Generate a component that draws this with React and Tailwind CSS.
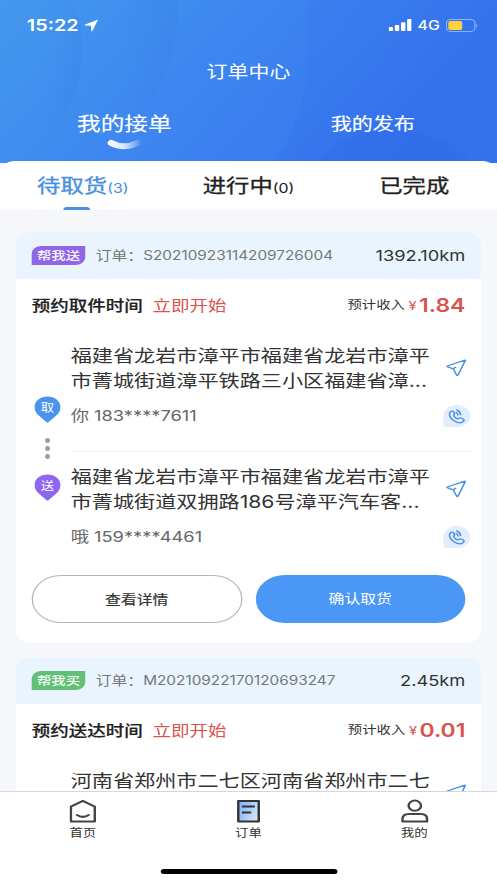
const orders = [
  {
    id: 'S20210923114209726004',
    tag: '帮我送',
    tagColor: 'bg-[#8f66e6]',
    distance: '1392.10km',
    timeLabel: '预约取件时间',
    income: '1.84',
    stops: [
      { lines: ['福建省龙岩市漳平市福建省龙岩市漳平', '市菁城街道漳平铁路三小区福建省漳...'], contact: '你 183****7611' },
      { lines: ['福建省龙岩市漳平市福建省龙岩市漳平', '市菁城街道双拥路186号漳平汽车客...'], contact: '哦 159****4461' },
    ],
  },
  {
    id: 'M20210922170120693247',
    tag: '帮我买',
    tagColor: 'bg-[#61bf76]',
    distance: '2.45km',
    timeLabel: '预约送达时间',
    income: '0.01',
    stops: [
      { lines: ['河南省郑州市二七区河南省郑州市二七'] },
    ],
  },
]

const SendIcon = () => (
  <svg className="mr-[1.5px] w-[17px] h-[18px]" viewBox="0 0 17 18" fill="none" stroke="#4a90e2" strokeWidth="1.3" strokeLinejoin="round">
    <path d="M15.6 1.2 L1.1 7 Q0.6 7.3 1.1 7.6 L6 9.8 L8.9 16.2 Q9.4 17 9.9 16.2 L15.9 1.8 Q16 1.1 15.6 1.2 Z" />
    <path d="M6 9.8 L8.4 7.9" />
  </svg>
)

const PhoneIcon = () => (
  <div className="w-[22px] h-[22px] flex items-center justify-center bg-[#e1edfb] rounded-[11px] rounded-bl-[2px]">
    <svg className="w-[14px] h-[15px]" viewBox="0 0 14 15" fill="none" stroke="#4a90e2" strokeWidth="1.3" strokeLinecap="round" strokeLinejoin="round">
      <path d="M1.7 2.9 C2.6 1.7 3.7 1.8 4.4 2.9 L5.1 4.2 C5.5 5.2 4.3 5.6 4.4 6.4 C4.8 8 6 9.2 7.5 9.8 C8.6 10 8.8 8.6 10 8.8 L12.2 10 C13.4 10.9 12.9 12 11.9 12.8 C10 14.3 7 13.9 4.4 11.6 C1.5 9 0 5.3 1.7 2.9 Z" />
      <path d="M6.5 3.5 Q7.8 4.3 7.9 6" />
      <path d="M7 0.9 Q9.7 2.3 10.1 5.6" />
    </svg>
  </div>
)

const Pin = ({ label, color }) => (
  <div className="relative w-[22px] h-[27px]">
    <svg className="w-[22px] h-[27px]" viewBox="0 0 22 27" fill={color}>
      <path d="M11 0.5 C17 0.5 21.6 5 21.6 11 C21.6 14.6 20.4 17.2 18.2 19.4 L12 26 Q11 27 10 26 L3.8 19.4 C1.6 17.2 0.4 14.6 0.4 11 C0.4 5 5 0.5 11 0.5 Z" />
    </svg>
    <span className="absolute inset-x-0 top-[4px] text-center text-[11px] leading-[16px] text-white">{label}</span>
  </div>
)

const Stop = ({ stop }) => (
  <div className="flex h-[121px] pt-[12px]">
    <div className="flex-1 whitespace-nowrap">
      <div className="text-[17.35px] leading-[25px] text-[#333]">
        {stop.lines.map((line) => (
          <p key={line}>{line}</p>
        ))}
      </div>
      <p className="mt-[13px] text-[15px] leading-[20px] text-[#666]">{stop.contact}</p>
    </div>
    <div className="w-[22px] flex flex-col items-center pt-[16px] gap-[28px]">
      <SendIcon />
      <PhoneIcon />
    </div>
  </div>
)

const OrderCard = ({ order }) => (
  <section className="shrink-0 bg-white rounded-[13px] overflow-hidden">
    <header className="h-[47px] px-[13px] flex items-center bg-[#eaf4fe]">
      <span className={`h-[19px] w-[44px] rounded-tl-[8px] rounded-br-[8px] text-center text-[11.8px] leading-[20px] text-white [-webkit-text-stroke:0.15px_white] ${order.tagColor}`}>
        {order.tag}
      </span>
      <span className="ml-[8.5px] text-[13px] text-[#777]">订单：</span>
      <span className="pt-[2px] text-[12.6px] text-[#777]">{order.id}</span>
      <span className="ml-auto pt-px text-[15px] text-[#333]">{order.distance}</span>
    </header>

    <div className="h-[52px] px-[13px] pt-[2px] flex items-center whitespace-nowrap">
      <span className="text-[15.2px] font-medium text-[#222] [-webkit-text-stroke:0.2px_#222]">{order.timeLabel}</span>
      <span className="ml-[8px] text-[15.2px] text-[#d9534f]">立即开始</span>
      <span className="ml-auto text-[11.8px] text-[#333]">预计收入</span>
      <span className="ml-[3px] text-[12px] text-[#d9534f]">¥</span>
      <span className="ml-[2px] text-[18.8px] font-semibold text-[#d9534f]">{order.income}</span>
    </div>

    <div className="flex pl-[13px] pr-[9px]">
      <div className="w-[32px] shrink-0 flex flex-col items-start pt-[64.5px] pl-[2px]">
        {order.stops.length > 1 && (
          <>
            <Pin label="取" color="#4a94ee" />
            <div className="w-[22px] flex flex-col items-center gap-[3.4px] pt-[15.5px] pb-[15.5px]">
              <i className="size-[4.6px] rounded-full bg-[#999da3]" />
              <i className="size-[4.6px] rounded-full bg-[#999da3]" />
              <i className="size-[4.6px] rounded-full bg-[#999da3]" />
            </div>
            <Pin label="送" color="#8f66f0" />
          </>
        )}
      </div>
      <div className="flex-1 divide-y divide-[#f2f2f2]">
        {order.stops.map((stop, i) => (
          <Stop key={i} stop={stop} />
        ))}
      </div>
    </div>

    {order.stops.length > 1 && (
      <div className="px-[13px] pt-[2px] pb-[20px] flex gap-[11px]">
        <button className="w-[172.5px] h-[48px] pt-px rounded-full border border-[#b5b5b5] text-[13px] text-[#333] [-webkit-text-stroke:0.2px_#333]">查看详情</button>
        <button className="flex-1 h-[48px] rounded-full bg-[#4b97f5] text-[13px] text-white">确认取货</button>
      </div>
    )}
  </section>
)

const StatusBar = () => (
  <div className="h-[50px] pl-[22px] pr-[15px] flex items-center text-white">
    <span className="text-[16.3px] font-semibold">15:22</span>
    <svg className="ml-[4px] w-[12px] h-[13px]" viewBox="0 0 12 13" fill="white">
      <path d="M11.6 0.5 L0.5 5.8 Q0 6.3 0.8 6.5 L5.6 6.8 L6 12 Q6.3 12.8 6.8 12 Z" />
    </svg>
    <svg className="ml-auto w-[19px] h-[12px]" viewBox="0 0 19 12" fill="white">
      <rect x="0" y="8" width="3.6" height="4" rx="0.8" />
      <rect x="5.1" y="6" width="3.6" height="6" rx="0.8" />
      <rect x="10.2" y="3.2" width="3.6" height="8.8" rx="0.8" />
      <rect x="15.2" y="0" width="3.6" height="12" rx="0.8" />
    </svg>
    <span className="ml-[5px] pt-[2px] text-[13px] font-medium">4G</span>
    <svg className="ml-[5px] w-[27px] h-[13px]" viewBox="0 0 27 13">
      <rect x="0.5" y="0.5" width="23.4" height="12" rx="3.4" fill="none" stroke="white" strokeOpacity="0.45" />
      <rect x="2" y="2" width="11.4" height="9" rx="1.8" fill="#fbd340" />
      <path d="M25 4.4 Q26.6 6.5 25 8.6 Z" fill="white" fillOpacity="0.5" />
    </svg>
  </div>
)

const HeaderBackground = () => (
  <svg className="absolute inset-0 w-full h-full" viewBox="0 0 497 163" preserveAspectRatio="none">
    <defs>
      <linearGradient id="sky" x1="0" y1="0" x2="1" y2="0.3">
        <stop offset="0" stopColor="#4399ee" />
        <stop offset="0.5" stopColor="#3c84f1" />
        <stop offset="1" stopColor="#3472ee" />
      </linearGradient>
      <linearGradient id="ring" x1="0" y1="0" x2="1" y2="0">
        <stop offset="0.82" stopColor="#2a6ad0" stopOpacity="0" />
        <stop offset="1" stopColor="#2a6ad0" stopOpacity="0.12" />
      </linearGradient>
    </defs>
    <rect width="497" height="163" fill="url(#sky)" />
    <path d="M309 0 H497 V163 H276 Q306 110 309 45 Z" fill="#2f6ae6" fillOpacity="0.08" />
    <ellipse cx="120" cy="45" rx="189" ry="210" fill="#4a94f2" fillOpacity="0.12" />
    <ellipse cx="30" cy="5" rx="148" ry="170" fill="url(#ring)" />
    <ellipse cx="-5" cy="50" rx="87" ry="108" fill="url(#ring)" />
    <ellipse cx="393" cy="185" rx="85" ry="55" fill="#2a66dc" fillOpacity="0.14" />
  </svg>
)

const HomeIcon = () => (
  <svg className="w-[22px] h-[24px]" viewBox="0 0 22 24" fill="none" stroke="#444" strokeWidth="2" strokeLinejoin="round">
    <path d="M1.2 7.6 L11 1.8 L20.8 7.6 V22.6 H1.2 Z" />
    <path d="M6.2 16 Q11 19.8 15.8 16" strokeLinecap="round" />
  </svg>
)

const OrderIcon = () => (
  <svg className="w-[20px] h-[24px]" viewBox="0 0 20 24">
    <defs>
      <linearGradient id="paper" x1="0" y1="0" x2="1" y2="0.4">
        <stop offset="0" stopColor="#78aef5" />
        <stop offset="1" stopColor="#cfe2fb" />
      </linearGradient>
    </defs>
    <rect x="1.6" y="2" width="16.8" height="20.4" fill="url(#paper)" stroke="#333" strokeWidth="2" strokeLinejoin="round" />
    <path d="M4.6 7.6 H15.2 M4.6 13.4 H12.2" stroke="#333" strokeWidth="2" />
  </svg>
)

const UserIcon = () => (
  <svg className="w-[23px] h-[24px]" viewBox="0 0 23 24" fill="none" stroke="#444" strokeWidth="2" strokeLinejoin="round">
    <circle cx="11.5" cy="6.7" r="5.1" />
    <path d="M1.4 22.5 V20 Q1.4 15 6.6 15 H16.4 Q21.6 15 21.6 20 V22.5 Z" />
  </svg>
)

const navItems = [
  { label: '首页', Icon: HomeIcon },
  { label: '订单', Icon: OrderIcon },
  { label: '我的', Icon: UserIcon },
]

// The whole screen is laid out 408px wide and stretched to the 497px viewport
export default function App() {
  return (
    <div className="w-[497px] h-[883px] overflow-hidden">
      <div className="w-[408px] h-[883px] origin-top-left scale-x-[1.2182] flex flex-col overflow-hidden bg-[#f5f7fa] font-['Inter','Noto_Sans_CJK_SC',sans-serif]">
        <div className="relative h-[163px] shrink-0">
          <HeaderBackground />
          <div className="relative text-white">
            <StatusBar />
            <h1 className="h-[44px] text-center text-[17.2px] leading-[44px]">订单中心</h1>
            <div className="grid grid-cols-2 text-center">
              <div className="flex flex-col items-center">
                <span className="text-[19.4px] leading-[60px] h-[45px] [-webkit-text-stroke:0.15px_white]">我的接单</span>
                <svg className="mr-[1px] w-[28px] h-[12px]" viewBox="0 0 28 12" fill="none">
                  <defs>
                    <linearGradient id="smile" gradientUnits="userSpaceOnUse" x1="0" y1="0" x2="28" y2="0">
                      <stop offset="0" stopColor="white" />
                      <stop offset="0.5" stopColor="white" stopOpacity="0.8" />
                      <stop offset="1" stopColor="white" stopOpacity="0.05" />
                    </linearGradient>
                  </defs>
                  <path d="M3.4 4 Q14 10.6 24.6 4" stroke="url(#smile)" strokeWidth="6" strokeLinecap="round" />
                </svg>
              </div>
              <span className="text-[17.3px] leading-[59px] [-webkit-text-stroke:0.15px_white]">我的发布</span>
            </div>
          </div>
        </div>

        <div className="relative -mt-[2px] h-[49px] shrink-0 grid grid-cols-3 bg-white rounded-t-[12px] text-[19.2px] leading-[50px] text-center text-[#222]">
          <div className="relative h-[49px] text-[#4a90e2] [-webkit-text-stroke:0.35px_#4a90e2]">
            待取货<span className="text-[13px] [-webkit-text-stroke:0.1px]">(3)</span>
            <i className="absolute bottom-0 left-[52px] w-[22px] h-[3px] rounded-t-[3px] bg-[#4a90e2]" />
          </div>
          <div className="h-[49px] [-webkit-text-stroke:0.3px_#222]">
            进行中<span className="text-[13px] [-webkit-text-stroke:0.1px]">(0)</span>
          </div>
          <div className="h-[49px] [-webkit-text-stroke:0.3px_#222]">已完成</div>
        </div>

        <main className="flex-1 min-h-0 overflow-hidden px-[13px] pt-[22px] flex flex-col gap-[14px]">
          {orders.map((order) => (
            <OrderCard key={order.id} order={order} />
          ))}
        </main>

        <nav className="h-[92px] shrink-0 bg-white border-t border-[#d5d6d9] flex flex-col items-center">
          <div className="w-full grid grid-cols-3 pt-[7px]">
            {navItems.map(({ label, Icon }) => (
              <div key={label} className="flex flex-col items-center text-[11px] leading-[20px] text-[#333]">
                <Icon />
                {label}
              </div>
            ))}
          </div>
          <div className="mt-[26px] w-[145px] h-[5px] rounded-full bg-black" />
        </nav>
      </div>
    </div>
  )
}
